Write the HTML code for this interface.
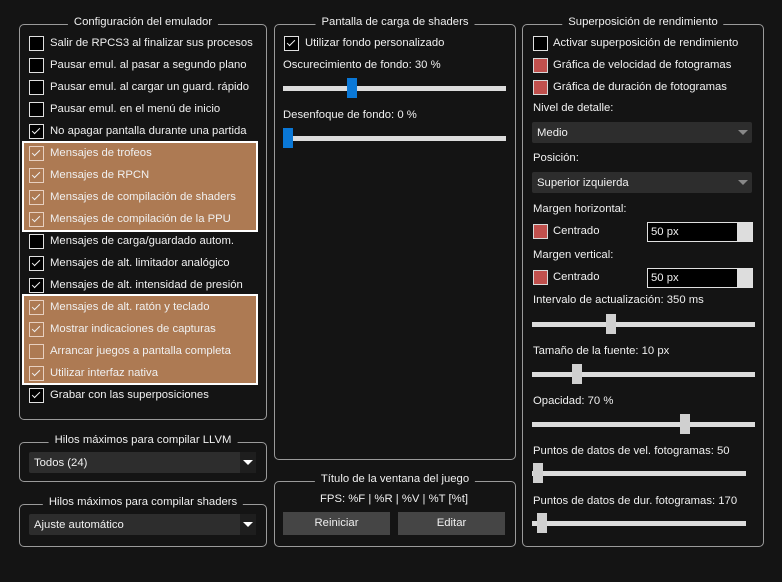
<!DOCTYPE html>
<html><head><meta charset="utf-8"><style>
body{margin:0;width:782px;height:582px;background:#141414;font-family:"Liberation Sans",sans-serif;font-size:11.3px;color:#f0f0f0;position:relative;overflow:hidden}
.g{position:absolute;border:1px solid #9a9a9a;border-radius:5px}
.gt{position:absolute;background:#141414;padding:0 6px;white-space:nowrap;transform:translateX(-50%);top:-9px;left:50%}
.t{position:absolute;white-space:nowrap;line-height:14px}
.cb{position:absolute;width:13px;height:13px;border:1px solid #e0e0e0;background:#000;box-sizing:content-box}
.cb.c::after{content:"";position:absolute;left:4px;top:1px;width:3px;height:7px;border:solid #f0f0f0;border-width:0 1.5px 1.5px 0;transform:rotate(45deg)}
.hl .cb{background:transparent;border-color:#e8d0c0}
.red{background:#c0504d;border-color:#d8d8d8}
.hlbox{position:absolute;background:#ad7a53;border:2px solid #fff}
.tr{position:absolute;height:5px;background:#dcdcdc}
.h{position:absolute;width:10px;height:20px;background:#d0d0d0}
.hb{background:#0a78d7}
.combo{position:absolute;background:#2d2d2d;height:21px;border-radius:2px}
.arr{position:absolute;right:4px;top:8px;border-left:5px solid transparent;border-right:5px solid transparent;border-top:5px solid #bbb}
.btn{position:absolute;background:#454545;height:23px;text-align:center;line-height:23px}
.spin{position:absolute;border:1px solid #e0e0e0;background:#000;height:18px;width:104px}
</style></head><body>

<div class="g" style="left:19px;top:24px;width:246px;height:394px"><div class="gt">Configuración del emulador</div></div>
<div class="hlbox" style="left:22px;top:141px;width:232px;height:87px"></div>
<div class="hlbox" style="left:22px;top:294px;width:232px;height:87px"></div>

<div class="cb" style="left:29px;top:36px"></div><div class="t" style="left:50px;top:36px">Salir de RPCS3 al finalizar sus procesos</div>
<div class="cb" style="left:29px;top:58px"></div><div class="t" style="left:50px;top:58px">Pausar emul. al pasar a segundo plano</div>
<div class="cb" style="left:29px;top:80px"></div><div class="t" style="left:50px;top:80px">Pausar emul. al cargar un guard. rápido</div>
<div class="cb" style="left:29px;top:102px"></div><div class="t" style="left:50px;top:102px">Pausar emul. en el menú de inicio</div>
<div class="cb c" style="left:29px;top:124px"></div><div class="t" style="left:50px;top:124px">No apagar pantalla durante una partida</div>
<div class="hl">
<div class="cb c" style="left:29px;top:146px"></div><div class="t" style="left:50px;top:146px">Mensajes de trofeos</div>
<div class="cb c" style="left:29px;top:168px"></div><div class="t" style="left:50px;top:168px">Mensajes de RPCN</div>
<div class="cb c" style="left:29px;top:190px"></div><div class="t" style="left:50px;top:190px">Mensajes de compilación de shaders</div>
<div class="cb c" style="left:29px;top:212px"></div><div class="t" style="left:50px;top:212px">Mensajes de compilación de la PPU</div>
</div>
<div class="cb" style="left:29px;top:234px"></div><div class="t" style="left:50px;top:234px">Mensajes de carga/guardado autom.</div>
<div class="cb c" style="left:29px;top:256px"></div><div class="t" style="left:50px;top:256px">Mensajes de alt. limitador analógico</div>
<div class="cb c" style="left:29px;top:278px"></div><div class="t" style="left:50px;top:278px">Mensajes de alt. intensidad de presión</div>
<div class="hl">
<div class="cb c" style="left:29px;top:300px"></div><div class="t" style="left:50px;top:300px">Mensajes de alt. ratón y teclado</div>
<div class="cb c" style="left:29px;top:322px"></div><div class="t" style="left:50px;top:322px">Mostrar indicaciones de capturas</div>
<div class="cb" style="left:29px;top:344px"></div><div class="t" style="left:50px;top:344px">Arrancar juegos a pantalla completa</div>
<div class="cb c" style="left:29px;top:366px"></div><div class="t" style="left:50px;top:366px">Utilizar interfaz nativa</div>
</div>
<div class="cb c" style="left:29px;top:388px"></div><div class="t" style="left:50px;top:388px">Grabar con las superposiciones</div>

<div class="g" style="left:19px;top:442px;width:246px;height:38px"><div class="gt">Hilos máximos para compilar LLVM</div></div>
<div class="combo" style="left:29px;top:452px;width:227px"><div class="t" style="left:5px;top:4px">Todos (24)</div><div style="position:absolute;right:0;top:0;width:16px;height:21px;background:#1e1e1e"></div><div class="arr" style="border-top-color:#fff;right:3px"></div></div>
<div class="g" style="left:19px;top:504px;width:246px;height:41px"><div class="gt">Hilos máximos para compilar shaders</div></div>
<div class="combo" style="left:29px;top:514px;width:227px"><div class="t" style="left:5px;top:4px">Ajuste automático</div><div style="position:absolute;right:0;top:0;width:16px;height:21px;background:#1e1e1e"></div><div class="arr" style="border-top-color:#fff;right:3px"></div></div>

<div class="g" style="left:274px;top:24px;width:240px;height:434px"><div class="gt">Pantalla de carga de shaders</div></div>
<div class="cb c" style="left:284px;top:36px"></div><div class="t" style="left:305px;top:36px">Utilizar fondo personalizado</div>
<div class="t" style="left:283px;top:58px">Oscurecimiento de fondo: 30 %</div>
<div class="tr" style="left:283px;top:86px;width:223px"></div><div class="h hb" style="left:347px;top:78px"></div>
<div class="t" style="left:283px;top:108px">Desenfoque de fondo: 0 %</div>
<div class="tr" style="left:283px;top:136px;width:223px"></div><div class="h hb" style="left:283px;top:128px"></div>

<div class="g" style="left:274px;top:481px;width:240px;height:64px"><div class="gt">Título de la ventana del juego</div></div>
<div class="t" style="left:0;width:788px;text-align:center;top:492px">FPS: %F | %R | %V | %T [%t]</div>
<div class="btn" style="left:283px;top:512px;width:107px">Reiniciar</div>
<div class="btn" style="left:398px;top:512px;width:107px">Editar</div>

<div class="g" style="left:522px;top:24px;width:240px;height:521px"><div class="gt">Superposición de rendimiento</div></div>
<div class="cb" style="left:533px;top:36px"></div><div class="t" style="left:553px;top:36px">Activar superposición de rendimiento</div>
<div class="cb red" style="left:533px;top:58px"></div><div class="t" style="left:553px;top:58px">Gráfica de velocidad de fotogramas</div>
<div class="cb red" style="left:533px;top:80px"></div><div class="t" style="left:553px;top:80px">Gráfica de duración de fotogramas</div>
<div class="t" style="left:533px;top:101px">Nivel de detalle:</div>
<div class="combo" style="left:532px;top:122px;width:220px"><div class="t" style="left:5px;top:4px">Medio</div><div class="arr" style="border-top-color:#888"></div></div>
<div class="t" style="left:533px;top:151px">Posición:</div>
<div class="combo" style="left:532px;top:172px;width:220px"><div class="t" style="left:5px;top:4px">Superior izquierda</div><div class="arr" style="border-top-color:#888"></div></div>
<div class="t" style="left:533px;top:202px">Margen horizontal:</div>
<div class="cb red" style="left:533px;top:224px"></div><div class="t" style="left:553px;top:224px">Centrado</div>
<div class="spin" style="left:647px;top:222px"><div class="t" style="left:3px;top:2px">50 px</div><div style="position:absolute;right:0;top:0;width:15px;height:18px;background:#ddd"></div></div>
<div class="t" style="left:533px;top:248px">Margen vertical:</div>
<div class="cb red" style="left:533px;top:270px"></div><div class="t" style="left:553px;top:270px">Centrado</div>
<div class="spin" style="left:647px;top:268px"><div class="t" style="left:3px;top:2px">50 px</div><div style="position:absolute;right:0;top:0;width:15px;height:18px;background:#ddd"></div></div>
<div class="t" style="left:533px;top:293px">Intervalo de actualización: 350 ms</div>
<div class="tr" style="left:532px;top:322px;width:223px"></div><div class="h" style="left:606px;top:314px"></div>
<div class="t" style="left:533px;top:344px">Tamaño de la fuente: 10 px</div>
<div class="tr" style="left:532px;top:372px;width:223px"></div><div class="h" style="left:572px;top:364px"></div>
<div class="t" style="left:533px;top:394px">Opacidad: 70 %</div>
<div class="tr" style="left:532px;top:422px;width:223px"></div><div class="h" style="left:680px;top:414px"></div>
<div class="t" style="left:533px;top:444px">Puntos de datos de vel. fotogramas: 50</div>
<div class="tr" style="left:532px;top:471px;width:214px"></div><div class="h" style="left:533px;top:463px"></div>
<div class="t" style="left:533px;top:494px">Puntos de datos de dur. fotogramas: 170</div>
<div class="tr" style="left:532px;top:521px;width:214px"></div><div class="h" style="left:537px;top:513px"></div>
</body></html>
